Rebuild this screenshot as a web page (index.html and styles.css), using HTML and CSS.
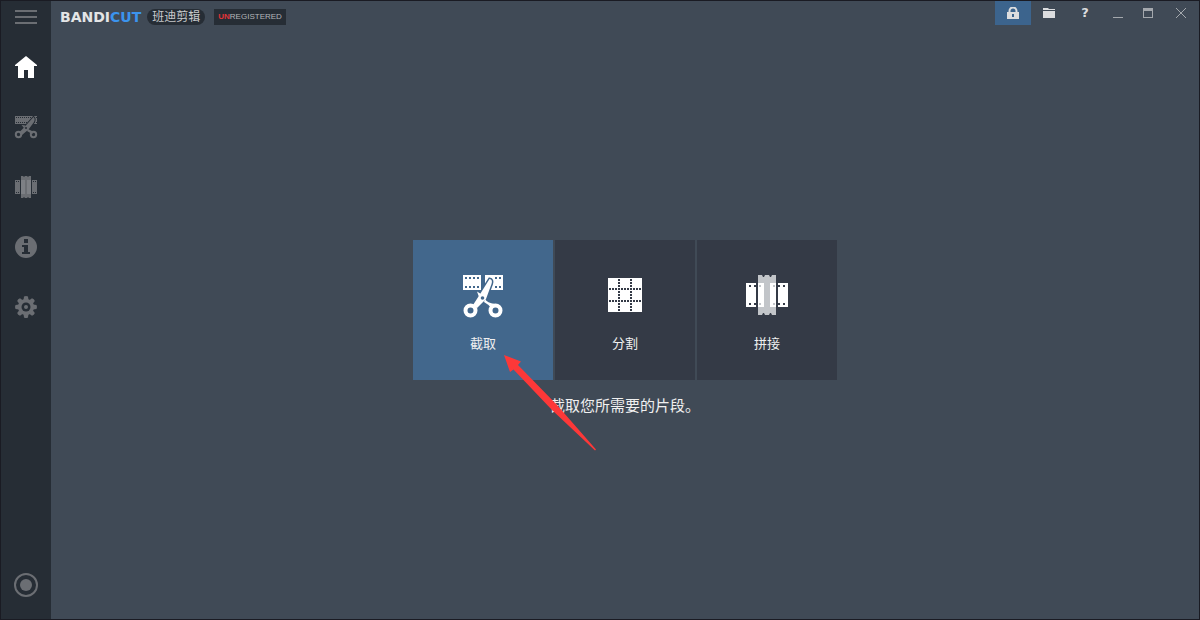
FILE: index.html
```html
<!DOCTYPE html>
<html lang="zh-CN">
<head>
<meta charset="utf-8">
<title>Bandicut</title>
<link rel="stylesheet" href="styles.css">
</head>
<body>
<div class="window">
  <nav class="sidebar" aria-label="导航">
    <button class="side-btn side-menu" aria-label="菜单">
      <svg width="22" height="16" viewBox="0 0 22 16"><path d="M0 1h22v2H0zM0 7h22v2H0zM0 13h22v2H0z"/></svg>
    </button>
    <button class="side-btn is-current" aria-label="主页">
      <svg width="24" height="24" viewBox="0 0 24 24"><path d="M12 1 23 10v1h-3v12h-6v-8h-4v8H4V11H1v-1z"/></svg>
    </button>
    <button class="side-btn" aria-label="截取">
      <svg width="24" height="24" viewBox="0 0 24 24">
        <path d="M1 1h22v8H1z"/>
        <path class="side-line" d="M2 2.500h21M2 7.500h21" stroke-dasharray="1 1"/>
        <path class="side-edge" d="M19.500 2q2 1.500.5 5L14.500 14.500 9 19l-3-2z"/>
        <path d="M19.500 2q2 1.500.5 5L14.500 14.500 8 20l-3-2.500 5-5z"/>
        <path d="m7.500 10 4 .5-1.500 2.500zM14 14l6 3-2 2-5-3z"/>
        <circle class="side-ring" cx="4.500" cy="19.500" r="2.700"/>
        <circle class="side-ring" cx="19.500" cy="19.500" r="2.700"/>
        <circle class="side-hole" cx="12" cy="13" r="1"/>
      </svg>
    </button>
    <button class="side-btn" aria-label="拼接">
      <svg width="24" height="24" viewBox="0 0 24 24">
        <path d="M1 5h5v14H1zM18 5h5v14h-5zM7 1h2l1 1 1-1h2l1 1 1-1h2v22h-2l-1-1-1 1h-2l-1-1-1 1H7z"/>
        <path class="side-hole" d="M2 6h1v1H2zM4 6h1v1H4zM2 17h1v1H2zM4 17h1v1H4zM19 6h1v1h-1zM21 6h1v1h-1zM19 17h1v1h-1zM21 17h1v1h-1z"/>
        <path class="side-shade" d="M7 5h4v14H7zM13 5h4v14h-4z"/>
      </svg>
    </button>
    <button class="side-btn" aria-label="信息">
      <svg width="24" height="24" viewBox="0 0 24 24">
        <circle cx="12" cy="12" r="11"/>
        <path class="side-hole" d="M10 4h4v4h-4zM8 10h6v7h2v2H8v-2h2v-5H8z"/>
      </svg>
    </button>
    <button class="side-btn" aria-label="设置">
      <svg width="24" height="24" viewBox="0 0 24 24">
        <g>
          <path id="tooth" d="M9.500 5 10 1.500q2-1 4 0l.5 3.500v14L14 22.500q-2 1-4 0L9.500 19z"/>
          <use href="#tooth" transform="rotate(45 12 12)"/>
          <use href="#tooth" transform="rotate(90 12 12)"/>
          <use href="#tooth" transform="rotate(135 12 12)"/>
        </g>
        <circle cx="12" cy="12" r="8"/>
        <circle class="side-hole" cx="12" cy="12" r="4.500"/>
        <circle cx="12" cy="12" r="2"/>
      </svg>
    </button>
    <button class="side-btn side-record" aria-label="录制">
      <svg width="24" height="24" viewBox="0 0 24 24">
        <circle class="side-ring" cx="12" cy="12" r="11"/>
        <circle cx="12" cy="12" r="6"/>
      </svg>
    </button>
  </nav>

  <main class="main">
    <header class="titlebar">
      <div class="brand">
        <span class="logo">BANDI<span class="logo-cut">CUT</span></span>
        <span class="pill">班迪剪辑</span>
        <span class="badge"><b class="badge-un">UN</b>REGISTERED</span>
      </div>
      <div class="controls">
        <button class="ctl ctl-lock" aria-label="注册">
          <svg width="12" height="12" viewBox="0 0 12 12"><path fill-rule="evenodd" d="M0 5h1.500V4a4.500 4.500 0 0 1 9 0v1H12v7H0zm3.500 0h5V4a2.500 2.500 0 0 0-5 0zM5 7v3h2V7z"/></svg>
        </button>
        <button class="ctl" aria-label="打开文件夹">
          <svg width="12" height="10" viewBox="0 0 12 10"><path d="M0 0h5l1 1h6v1H0zM0 3h12v7H0z"/></svg>
        </button>
        <button class="ctl ctl-help" aria-label="帮助">?</button>
        <button class="ctl ctl-narrow" aria-label="最小化">
          <svg width="10" height="10" viewBox="0 0 10 10"><path d="M0 9h10v1H0z"/></svg>
        </button>
        <button class="ctl ctl-narrow" aria-label="最大化">
          <svg width="10" height="10" viewBox="0 0 10 10"><path fill-rule="evenodd" d="M0 0h10v10H0zM1 3v6h8V3z"/></svg>
        </button>
        <button class="ctl ctl-close" aria-label="关闭">
          <svg width="10" height="10" viewBox="0 0 10 10"><path class="cross" d="m0 0 10 10M10 0 0 10"/></svg>
        </button>
      </div>
    </header>

    <div class="tiles">
      <button class="tile is-active">
        <svg width="60" height="60" viewBox="0 0 60 60">
          <path fill-rule="evenodd" d="M10 10h18v15H10zM32 10h18v15H32z"/>
          <path class="film-hole" d="M12 12h2v2h-2zM16 12h2v2h-2zM20 12h2v2h-2zM24 12h2v2h-2zM12 21h2v2h-2zM16 21h2v2h-2zM20 21h2v2h-2zM24 21h2v2h-2zM42 12h2v2h-2zM46 12h2v2h-2zM42 21h2v2h-2zM46 21h2v2h-2z"/>
          <path class="blade-edge" d="M36.500 14q3.500.5 2 5L33 34l-9 9-4-3 6.500-10z"/>
          <path d="M36.500 14q3.500.5 2 5L33 34l-9 9-4-3 6.500-10z"/>
          <path d="m24 26.500 4 2.500-2 3zM32 34q2 4 10 5l-4 4q-3-4-7-6z"/>
          <circle class="ring" cx="17.500" cy="45.500" r="5"/>
          <circle class="ring" cx="42.500" cy="45.500" r="5"/>
          <circle class="film-hole" cx="29.500" cy="33" r="1.800"/>
        </svg>
        <span class="tile-label">截取</span>
      </button>
      <button class="tile">
        <svg width="60" height="60" viewBox="0 0 60 60">
          <path d="M13 13h34v34H13z"/>
          <path class="dots" d="M14 24h32M14 36h32M24 14v32M36 14v32"/>
        </svg>
        <span class="tile-label">分割</span>
      </button>
      <button class="tile">
        <svg width="60" height="60" viewBox="0 0 60 60">
          <path d="M9 18h10v24H9zM41 18h10v24H41z"/>
          <path class="strip" d="M21 10h4l1 2h1l1-2h4l1 2h1l1-2h4v40h-4l-1-2h-1l-1 2h-4l-1-2h-1l-1 2h-4z"/>
          <path d="M21 18h6v24h-6zM33 18h6v24h-6z"/>
          <path class="strip" d="M22 20h2v2h-2zM22 38h2v2h-2zM36 20h2v2h-2zM36 38h2v2h-2z"/>
          <path class="film-hole" d="M12 20h2v2h-2zM17 20h2v2h-2zM12 38h2v2h-2zM17 38h2v2h-2zM41 20h2v2h-2zM46 20h2v2h-2zM41 38h2v2h-2zM46 38h2v2h-2z"/>
        </svg>
        <span class="tile-label">拼接</span>
      </button>
      <svg class="pointer" width="92" height="96" viewBox="0 0 92 96" aria-hidden="true">
        <path d="M0 0 17 6.500 14 10 53 50 92 94.500 91 95.500 48 55 9.500 14.500 6 17z"/>
      </svg>
    </div>

    <p class="caption">截取您所需要的片段。</p>
  </main>
</div>
</body>
</html>
```

FILE: styles.css
```css
* {
  box-sizing: border-box;
}

body {
  margin: 0;
  font-family: "Liberation Sans", "Noto Sans CJK SC", sans-serif;
  color: #f0f0f0;
}

button {
  border: 0;
  padding: 0;
  background: none;
  color: inherit;
  font: inherit;
}

svg {
  display: block;
  flex: none;
  fill: currentColor;
}

.window {
  display: flex;
  min-height: 100vh;
  border: 1px solid #1a1b23;
  background: #404a56;
}

.sidebar {
  display: flex;
  flex-direction: column;
  flex: none;
  width: 50px;
  padding-bottom: 4px;
  background: #262d35;
  color: #6b6e73;
}

.side-btn {
  display: flex;
  align-items: center;
  justify-content: center;
  height: 60px;
}

.side-menu {
  height: 32px;
  margin-bottom: 4px;
}

.side-record {
  margin-top: auto;
}

.is-current {
  color: #fff;
}

.side-line {
  fill: none;
  stroke: #262d35;
}

.side-hole {
  fill: #262d35;
}

.side-edge {
  fill: #262d35;
  stroke: #262d35;
  stroke-width: 2;
}

.side-ring {
  fill: none;
  stroke: currentColor;
  stroke-width: 2;
}

.side-shade {
  fill: #7d8085;
}

.main {
  display: grid;
  flex: 1;
  grid-template-rows: 1fr auto 1fr;
  justify-items: center;
}

.titlebar {
  display: flex;
  justify-content: space-between;
  align-items: flex-start;
  justify-self: stretch;
}

.brand {
  display: flex;
  align-items: center;
  height: 32px;
  padding-left: 9px;
}

.logo {
  margin-right: 6px;
  font: bold 14px/16px "DejaVu Sans", sans-serif;
  color: #e4e5e6;
}

.logo-cut {
  color: #3b94ee;
}

.pill {
  margin-right: 9px;
  padding: 0 5px;
  border-radius: 8px;
  background: #262d35;
  color: #c8cacc;
  font-size: 12px;
  line-height: 16px;
}

.badge {
  padding: 0 4px;
  background: #262d35;
  color: #b4b6b9;
  font-size: 8px;
  line-height: 16px;
}

.badge-un {
  color: #e03438;
}

.controls {
  display: flex;
  color: #dcdddf;
}

.ctl {
  display: flex;
  align-items: center;
  justify-content: center;
  width: 36px;
  height: 24px;
}

.ctl-lock {
  background: #3c648d;
}

.ctl-help {
  font: bold 13px/24px "DejaVu Sans", sans-serif;
}

.ctl-narrow {
  width: 30px;
  color: #a4a8ad;
}

.ctl-close {
  color: #a4a8ad;
}

.cross {
  stroke: currentColor;
}

.tiles {
  position: relative;
  display: flex;
  gap: 2px;
}

.tile {
  --tile-bg: #343a46;
  display: flex;
  flex-direction: column;
  align-items: center;
  gap: 9px;
  width: 140px;
  padding: 25px 0 26px;
  background: var(--tile-bg);
  color: #fff;
}

.tile.is-active {
  --tile-bg: #42678c;
}

.tile-label {
  font-size: 13px;
  line-height: 20px;
  color: #f0f0f0;
}

.film-hole {
  fill: var(--tile-bg);
}

.blade-edge {
  stroke: var(--tile-bg);
  stroke-width: 3;
}

.ring {
  fill: none;
  stroke: currentColor;
  stroke-width: 4;
}

.dots {
  fill: none;
  stroke: var(--tile-bg);
  stroke-width: 2;
  stroke-dasharray: 2 1;
}

.strip {
  fill: #c2c5c9;
}

.pointer {
  position: absolute;
  left: 91px;
  top: 115px;
  color: #fd3838;
  z-index: 1;
}

.caption {
  margin: 14px 0 0;
  font-size: 15px;
  line-height: 24px;
}
```
